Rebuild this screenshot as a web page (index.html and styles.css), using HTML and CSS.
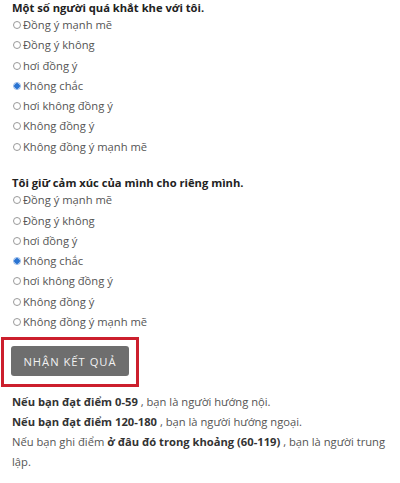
FILE: index.html
```html
<!DOCTYPE html>
<html lang="vi">
<head>
<meta charset="utf-8">
<link rel="stylesheet" href="styles.css">
</head>
<body>
<div class="page">
  <section class="question first">
    <h3 class="q-title">Một số người quá khắt khe với tôi.</h3>
    <label class="opt"><input type="radio" name="q1"><span>Đồng ý mạnh mẽ</span></label>
    <label class="opt"><input type="radio" name="q1"><span>Đồng ý không</span></label>
    <label class="opt"><input type="radio" name="q1"><span>hơi đồng ý</span></label>
    <label class="opt"><input type="radio" name="q1" checked><span>Không chắc</span></label>
    <label class="opt"><input type="radio" name="q1"><span>hơi không đồng ý</span></label>
    <label class="opt"><input type="radio" name="q1"><span>Không đồng ý</span></label>
    <label class="opt"><input type="radio" name="q1"><span>Không đồng ý mạnh mẽ</span></label>
  </section>
  <section class="question second">
    <h3 class="q-title">Tôi giữ cảm xúc của mình cho riêng mình.</h3>
    <label class="opt"><input type="radio" name="q2"><span>Đồng ý mạnh mẽ</span></label>
    <label class="opt"><input type="radio" name="q2"><span>Đồng ý không</span></label>
    <label class="opt"><input type="radio" name="q2"><span>hơi đồng ý</span></label>
    <label class="opt"><input type="radio" name="q2" checked><span>Không chắc</span></label>
    <label class="opt"><input type="radio" name="q2"><span>hơi không đồng ý</span></label>
    <label class="opt"><input type="radio" name="q2"><span>Không đồng ý</span></label>
    <label class="opt"><input type="radio" name="q2"><span>Không đồng ý mạnh mẽ</span></label>
  </section>
  <div class="highlight">
    <button class="submit" type="button">Nhận kết quả</button>
  </div>
  <div class="results">
    <p><strong>Nếu bạn đạt điểm 0-59</strong> , bạn là người hướng nội.</p>
    <p><strong>Nếu bạn đạt điểm 120-180</strong> , bạn là người hướng ngoại.</p>
    <p>Nếu bạn ghi điểm <strong>ở đâu đó trong khoảng (60-119)</strong> , bạn là người trung lập.</p>
  </div>
</div>
</body>
</html>
```

FILE: styles.css
```css
html, body {
  margin: 0;
  padding: 0;
  background: #ffffff;
}
body {
  font-family: "Open Sans", "Noto Sans", "Liberation Sans", sans-serif;
  color: #555555;
  font-size: 11.2px;
}
.page {
  width: 380px;
  padding-left: 12px;
}
.question {
  display: flex;
  flex-direction: column;
}
.second {
  margin-top: 18.5px;
}
.q-title {
  margin: 0;
  font-size: 11.2px;
  line-height: 15px;
  font-weight: 700;
  color: #222222;
}
.opt {
  display: flex;
  align-items: center;
  height: 20.25px;
  line-height: 20px;
  color: #555555;
}
.opt input {
  -webkit-appearance: none;
  appearance: none;
  box-sizing: border-box;
  width: 8px;
  height: 8px;
  margin: 0 2px 0 1px;
  border: 1px solid #9a9a9a;
  border-radius: 50%;
  background: #ffffff;
}
.opt input:checked {
  border-color: #8fb4e6;
  background: radial-gradient(circle, #2a74d2 0 2.6px, #dbe7f7 3px);
}
.highlight {
  box-sizing: border-box;
  width: 138px;
  margin: 5px 0 0 -11px;
  border: 3px solid #cc1f2d;
  padding: 6px 7px 8px 7px;
}
.submit {
  display: block;
  width: 118px;
  height: 30px;
  border: 0;
  border-radius: 3px;
  background: #6e6e6e;
  color: #f2f2f2;
  font-family: "Open Sans", "Noto Sans", "Liberation Sans", sans-serif;
  font-size: 11.2px;
  letter-spacing: 1px;
  text-transform: uppercase;
  padding: 0;
}
.results {
  margin-top: 5px;
}
.results p {
  margin: 0;
  line-height: 20px;
}
.results strong {
  color: #333333;
  font-weight: 700;
}
```
